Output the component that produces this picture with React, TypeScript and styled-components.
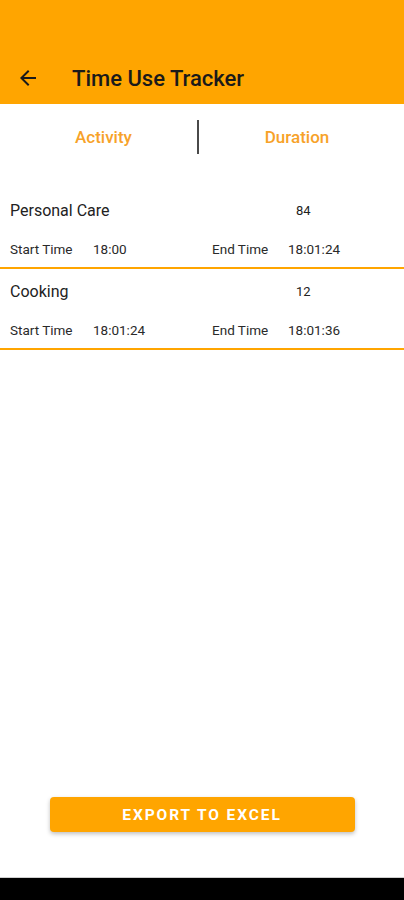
import styled, { createGlobalStyle } from "styled-components";

const GlobalStyle = createGlobalStyle`
  html, body {
    margin: 0;
    padding: 0;
    background: #ffffff;
    font-family: Roboto, "Liberation Sans", sans-serif;
  }
  * {
    box-sizing: border-box;
  }
`;

const Screen = styled.div`
  width: 404px;
  height: 900px;
  display: flex;
  flex-direction: column;
  background: #ffffff;
`;

const Header = styled.div`
  height: 104px;
  background-color: #ffa500;
  display: flex;
  align-items: flex-end;
`;

const Toolbar = styled.div`
  height: 52px;
  width: 100%;
  display: flex;
  align-items: center;
  padding-left: 16px;
`;

const BackButton = styled.svg`
  width: 24px;
  height: 24px;
  fill: #1a1a1a;
`;

const Title = styled.h1`
  margin: 0 0 0 32px;
  font-size: 22px;
  font-weight: 500;
  color: #1a1a1a;
`;

const Tabs = styled.div`
  height: 66px;
  display: grid;
  grid-template-columns: 187px 2px 196px;
  align-items: center;
  padding-left: 10px;
`;

const Tab = styled.div`
  text-align: center;
  font-size: 17px;
  font-weight: 500;
  color: #f7a229;
`;

const Divider = styled.div`
  width: 2px;
  height: 34px;
  background: #4a4a4a;
`;

const List = styled.div`
  margin-top: 18px;
  display: flex;
  flex-direction: column;
`;

const Row = styled.div`
  padding: 12px 0 10px 10px;
  border-bottom: 2px solid #ffa500;
`;

const NameLine = styled.div`
  display: grid;
  grid-template-columns: 286px auto;
  align-items: center;
  height: 20px;
  color: #222222;
`;

const Name = styled.span`
  font-size: 16px;
`;

const Amount = styled.span`
  font-size: 13px;
`;

const DetailLine = styled.div`
  margin-top: 21px;
  height: 16px;
  display: grid;
  grid-template-columns: 83px 119px 76px auto;
  align-items: center;
  font-size: 13.5px;
  color: #2a2a2a;
`;

const Spacer = styled.div`
  flex: 1;
`;

const Footer = styled.div`
  display: flex;
  justify-content: center;
  padding-bottom: 45px;
`;

const ExportButton = styled.button`
  width: 305px;
  height: 35px;
  border: none;
  border-radius: 4px;
  background-color: #ffa500;
  color: #ffffff;
  font-family: Roboto, "Liberation Sans", sans-serif;
  font-size: 15.5px;
  font-weight: 700;
  letter-spacing: 1.9px;
  box-shadow: 0 2px 4px rgba(0, 0, 0, 0.25);
`;

const NavBar = styled.div`
  height: 23px;
  background: #000000;
  border-top: 1px solid #cfcfcf;
`;

type Entry = {
  name: string;
  minutes: number;
  start: string;
  end: string;
};

const entries: Entry[] = [
  { name: "Personal Care", minutes: 84, start: "18:00", end: "18:01:24" },
  { name: "Cooking", minutes: 12, start: "18:01:24", end: "18:01:36" },
];

export default function App() {
  return (
    <Screen>
      <GlobalStyle />
      <Header>
        <Toolbar>
          <BackButton viewBox="0 0 24 24">
            <path d="M20 11H7.83l5.59-5.59L12 4l-8 8 8 8 1.41-1.41L7.83 13H20v-2z" />
          </BackButton>
          <Title>Time Use Tracker</Title>
        </Toolbar>
      </Header>
      <Tabs>
        <Tab>Activity</Tab>
        <Divider />
        <Tab>Duration</Tab>
      </Tabs>
      <List>
        {entries.map((e) => (
          <Row key={e.name}>
            <NameLine>
              <Name>{e.name}</Name>
              <Amount>{e.minutes}</Amount>
            </NameLine>
            <DetailLine>
              <span>Start Time</span>
              <span>{e.start}</span>
              <span>End Time</span>
              <span>{e.end}</span>
            </DetailLine>
          </Row>
        ))}
      </List>
      <Spacer />
      <Footer>
        <ExportButton>EXPORT TO EXCEL</ExportButton>
      </Footer>
      <NavBar />
    </Screen>
  );
}
